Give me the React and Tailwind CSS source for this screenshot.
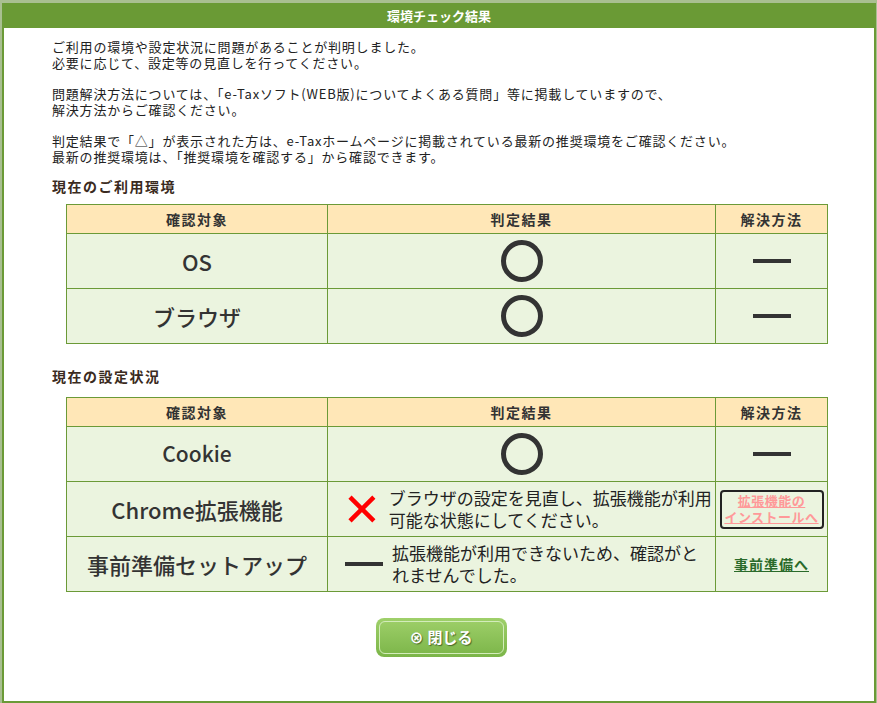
import React from "react";

function Circle() {
  return (
    <svg width="44" height="44" viewBox="0 0 44 44">
      <circle cx="22" cy="22" r="18.5" fill="none" stroke="#333" strokeWidth="5" />
    </svg>
  );
}

function Dash() {
  return <div className="w-[38px] h-[4px] bg-[#333]" />;
}

function Cross() {
  return (
    <svg width="28" height="28" viewBox="0 0 28 28">
      <path d="M2 2 L26 26 M26 2 L2 26" stroke="#f00" strokeWidth="4.5" />
    </svg>
  );
}

const cell = "border border-[#6b9a37] bg-[#ebf4df]";
const head =
  "border border-[#6b9a37] bg-[#ffe7b7] text-[14px] tracking-[1.5px] font-bold text-[#333] h-[29px] text-center";

function HeaderRow() {
  return (
    <tr>
      <th className={`${head} w-[261px]`}>確認対象</th>
      <th className={`${head} w-[388px]`}>判定結果</th>
      <th className={`${head} w-[112px]`}>解決方法</th>
    </tr>
  );
}

function ResultRow({ name, nameSize = "text-[22px]", result, action }) {
  return (
    <tr>
      <td className={`${cell} h-[55px] text-center ${nameSize} font-medium text-[#333]`}>{name}</td>
      <td className={`${cell} h-[55px]`}>{result}</td>
      <td className={`${cell} h-[55px]`}>
        <div className="flex justify-center items-center">{action}</div>
      </td>
    </tr>
  );
}

export default function App() {
  return (
    <div
      className="w-[877px] h-[703px] bg-[#a9bf91] pt-[3px] pl-[2px] overflow-hidden"
      style={{ fontFamily: '"Noto Sans CJK JP", "Noto Sans", sans-serif' }}
    >
      <div className="w-[874px] h-[700px] bg-white border-l-2 border-r-2 border-b-2 border-[#6b9a37] flex flex-col">
        <div className="h-[25px] bg-[#6a9a35] text-white text-[13px] font-bold flex items-center justify-center">
          環境チェック結果
        </div>
        <div className="pl-[48px] pt-[11px] text-[13px] leading-[16px] tracking-[0.8px] text-[#222]">
          <p>ご利用の環境や設定状況に問題があることが判明しました。</p>
          <p>必要に応じて、設定等の見直しを行ってください。</p>
          <p className="mt-[15px]">
            問題解決方法については、「e-Taxソフト(WEB版)についてよくある質問」等に掲載していますので、
          </p>
          <p>解決方法からご確認ください。</p>
          <p className="mt-[15px]">
            判定結果で「△」が表示された方は、e-Taxホームページに掲載されている最新の推奨環境をご確認ください。
          </p>
          <p>最新の推奨環境は、「推奨環境を確認する」から確認できます。</p>
          <p className="mt-[13px] text-[14px] tracking-[1.5px] font-bold text-[#3a2a20]">現在のご利用環境</p>
        </div>
        <table className="ml-[62px] mt-[10px] w-[761px] border-collapse table-fixed">
          <tbody>
            <HeaderRow />
            <ResultRow
              name="OS"
              result={<div className="flex justify-center"><Circle /></div>}
              action={<Dash />}
            />
            <ResultRow
              name="ブラウザ"
              result={<div className="flex justify-center"><Circle /></div>}
              action={<Dash />}
            />
          </tbody>
        </table>
        <p className="pl-[48px] mt-[24px] text-[14px] leading-[16px] tracking-[1.5px] font-bold text-[#3a2a20]">
          現在の設定状況
        </p>
        <table className="ml-[62px] mt-[13px] w-[761px] border-collapse table-fixed">
          <tbody>
            <HeaderRow />
            <ResultRow
              name="Cookie"
              nameSize="text-[21px]"
              result={<div className="flex justify-center"><Circle /></div>}
              action={<Dash />}
            />
            <ResultRow
              name="Chrome拡張機能"
              result={
                <div className="flex items-center pl-[20px]">
                  <Cross />
                  <p className="ml-[13px] w-[328px] text-[17px] leading-[22px] text-[#222]">
                    ブラウザの設定を見直し、拡張機能が利用可能な状態にしてください。
                  </p>
                </div>
              }
              action={
                <div className="w-[104px] h-[39px] border-2 border-[#222] rounded-[4px] flex flex-col items-center justify-center text-[13px] leading-[16px] tracking-[0.5px] whitespace-nowrap font-bold text-[#f99] underline">
                  <span>拡張機能の</span>
                  <span>インストールへ</span>
                </div>
              }
            />
            <ResultRow
              name="事前準備セットアップ"
              nameSize="text-[22px] font-bold"
              result={
                <div className="flex items-center pl-[17px]">
                  <Dash />
                  <p className="ml-[9px] w-[312px] text-[17px] leading-[22px] text-[#222]">
                    拡張機能が利用できないため、確認がとれませんでした。
                  </p>
                </div>
              }
              action={
                <span className="text-[14px] tracking-[1px] font-bold text-[#2a6a2a] underline">事前準備へ</span>
              }
            />
          </tbody>
        </table>
        <div className="flex justify-center mt-[26px] pl-[4px]">
          <button className="w-[131px] h-[39px] rounded-[8px] bg-gradient-to-b from-[#9fd06a] to-[#7bb548] p-[3px]">
            <div className="w-full h-full rounded-[6px] border border-[#d3ecbb] flex items-center justify-center text-white font-bold text-[15px] [text-shadow:1px_1px_1px_#4a6a2a]">
              <span className="mr-[4px] text-[14px]">⊗</span>閉じる
            </div>
          </button>
        </div>
      </div>
    </div>
  );
}
